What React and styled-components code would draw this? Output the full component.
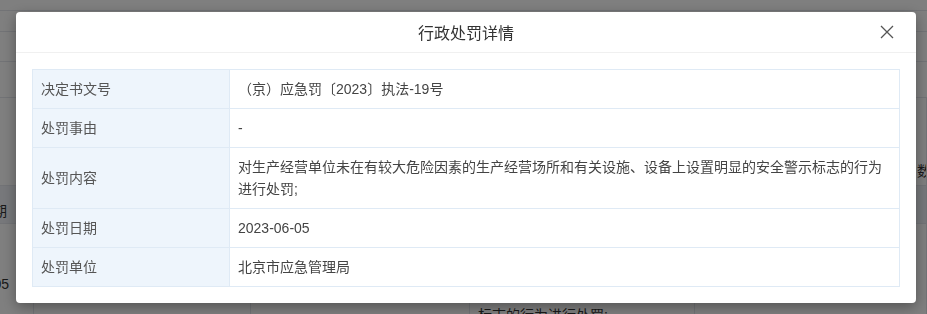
import React from 'react';
import styled, { createGlobalStyle } from 'styled-components';

const GlobalStyle = createGlobalStyle`
  html, body {
    margin: 0;
    padding: 0;
    height: 100%;
    overflow: hidden;
  }
  body {
    font-family: "Liberation Sans", "Noto Sans CJK SC", sans-serif;
    color: #333;
    background: #fff;
  }
`;

// the list page sitting behind the dialog
const BackPage = styled.div`
  height: 314px;
  overflow: hidden;
  background: #fff;
  display: flex;
  flex-direction: column;
`;

const BackLine = styled.div`
  flex-shrink: 0;
  height: ${(p) => p.$h}px;
  border-bottom: 1px solid #e4e7ed;
  box-sizing: border-box;
`;

const BackRow = styled.div`
  flex-shrink: 0;
  display: grid;
  grid-template-columns: 34px 217px 219px 225px 1fr;
  height: ${(p) => p.$h}px;
  background: ${(p) => (p.$head ? '#eef1f6' : '#fff')};
  border-bottom: 1px solid #e4e7ed;
  box-sizing: border-box;
  font-size: 14px;
  line-height: 18px;
  color: #333;
`;

const BackCell = styled.div`
  display: flex;
  align-items: ${(p) => p.$align || 'center'};
  justify-content: ${(p) => (p.$end ? 'flex-end' : 'flex-start')};
  padding: ${(p) => p.$pad || '0 8px'};
  border-right: 1px solid #e4e7ed;
  overflow: hidden;
  white-space: nowrap;
`;

const Overlay = styled.div`
  position: fixed;
  inset: 0;
  background: rgba(0, 0, 0, 0.5);
  display: flex;
  align-items: flex-start;
  padding: 12px 0 0 16px;
`;

const Dialog = styled.div`
  width: 900px;
  background: #fff;
  border-radius: 4px;
  box-shadow: 0 4px 14px rgba(0, 0, 0, 0.35);
`;

const Header = styled.div`
  height: 40px;
  display: grid;
  grid-template-columns: 1fr auto 1fr;
  align-items: center;
  padding: 0 20px;
  border-bottom: 1px solid #f0f0f0;
`;

const Title = styled.div`
  grid-column: 2;
  font-size: 16px;
  color: #333;
`;

const CloseBtn = styled.button`
  grid-column: 3;
  justify-self: end;
  width: 16px;
  height: 16px;
  padding: 0;
  border: none;
  background: none;
  display: flex;
  align-items: center;
  justify-content: center;
  margin-right: 1px;
  cursor: pointer;
`;

const Body = styled.div`
  padding: 16px;
`;

const Table = styled.table`
  width: 100%;
  border-collapse: collapse;
  table-layout: fixed;
  font-size: 14px;
  line-height: 22px;
`;

const Label = styled.td`
  padding: 8px;
  background: #eef5fc;
  border: 1px solid #dfeaf5;
  color: #555;
  vertical-align: middle;
`;

const Value = styled.td`
  padding: 8px;
  border: 1px solid #dfeaf5;
  color: #444;
  vertical-align: middle;
`;

const rows = [
  { label: '决定书文号', value: '（京）应急罚〔2023〕执法-19号' },
  { label: '处罚事由', value: '-' },
  {
    label: '处罚内容',
    value:
      '对生产经营单位未在有较大危险因素的生产经营场所和有关设施、设备上设置明显的安全警示标志的行为进行处罚;',
  },
  { label: '处罚日期', value: '2023-06-05' },
  { label: '处罚单位', value: '北京市应急管理局' },
];

function CloseIcon() {
  return (
    <svg width="14" height="14" viewBox="0 0 14 14">
      <path d="M1 1 L13 13 M13 1 L1 13" stroke="#555" strokeWidth="1.3" fill="none" />
    </svg>
  );
}

function Backdrop() {
  return (
    <BackPage>
      <BackLine $h={11} />
      <BackLine $h={21} />
      <BackLine $h={30} />
      <BackLine $h={36} />
      <BackRow $h={88}>
        <BackCell />
        <BackCell />
        <BackCell />
        <BackCell />
        <BackCell $pad="0 0 5px 222px" $align="flex-end">数据</BackCell>
      </BackRow>
      <BackRow $h={38} $head>
        <BackCell $end $pad="0 26px 3px 0" $align="flex-end">处罚日期</BackCell>
        <BackCell />
        <BackCell />
        <BackCell />
        <BackCell />
      </BackRow>
      <BackRow $h={108}>
        <BackCell $end $pad="0 24px 38px 0" $align="flex-end">2023-06-05</BackCell>
        <BackCell />
        <BackCell />
        <BackCell $pad="0 8px 7px" $align="flex-end">标志的行为进行处罚;</BackCell>
        <BackCell />
      </BackRow>
    </BackPage>
  );
}

export default function App() {
  return (
    <>
      <GlobalStyle />
      <Backdrop />
      <Overlay>
        <Dialog>
          <Header>
            <Title>行政处罚详情</Title>
            <CloseBtn aria-label="关闭">
              <CloseIcon />
            </CloseBtn>
          </Header>
          <Body>
            <Table>
              <colgroup>
                <col style={{ width: 197 }} />
                <col />
              </colgroup>
              <tbody>
                {rows.map((r) => (
                  <tr key={r.label}>
                    <Label>{r.label}</Label>
                    <Value>{r.value}</Value>
                  </tr>
                ))}
              </tbody>
            </Table>
          </Body>
        </Dialog>
      </Overlay>
    </>
  );
}
